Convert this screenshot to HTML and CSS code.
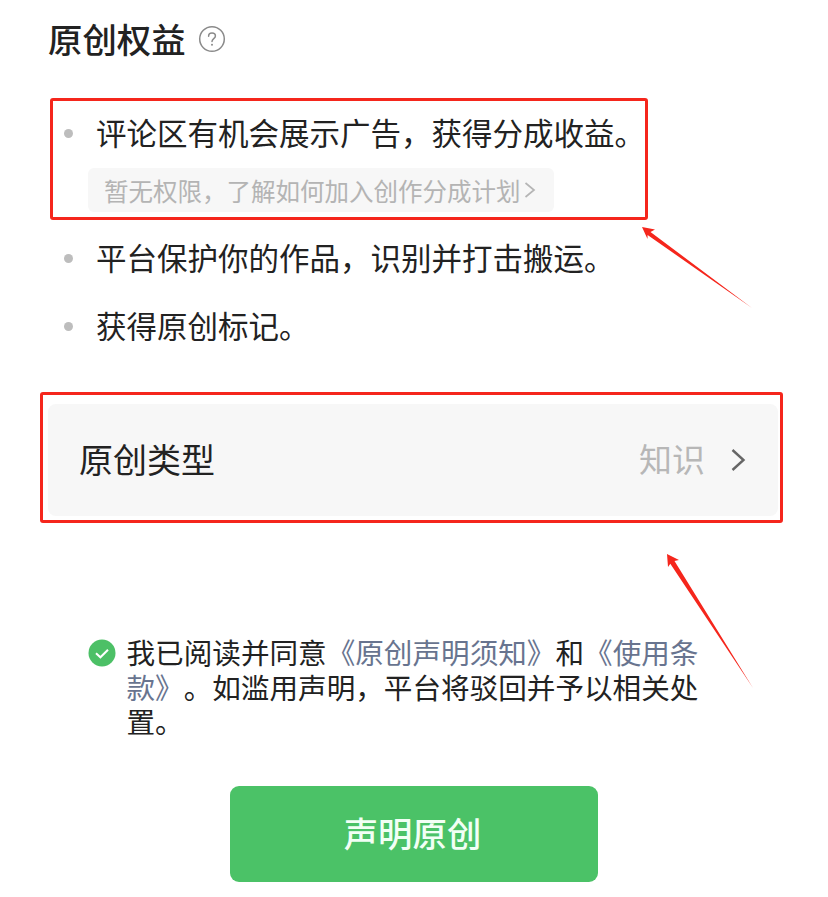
FILE: index.html
```html
<!DOCTYPE html>
<html lang="zh-CN">
<head>
    <meta charset="UTF-8">
    <meta name="viewport" content="width=device-width, initial-scale=1.0">
    <link rel="stylesheet" href="styles.css">
</head>
<body>
    <div class="page">
        <div class="title-row">
            <h1 class="page-title">原创权益</h1>
            <svg class="help-icon" width="28" height="28" viewBox="0 0 28 28" fill="none">
                <circle cx="14" cy="14" r="12.3" stroke="#8a8a8a" stroke-width="1.5"/>
                <path d="M10.6 11.2c0-1.9 1.5-3.2 3.4-3.2s3.4 1.2 3.4 3c0 2.6-3.4 2.7-3.4 5.4" stroke="#8a8a8a" stroke-width="1.5" stroke-linecap="round"/>
                <circle cx="14" cy="19.8" r="1" fill="#8a8a8a"/>
            </svg>
        </div>
        <ul class="rights-list">
            <li class="rights-item">
                <span class="rights-text">评论区有机会展示广告，获得分成收益。</span>
                <a class="rights-note" href="#">暂无权限，了解如何加入创作分成计划<svg class="note-arrow" width="12" height="18" viewBox="0 0 12 18" fill="none"><path d="M1.5 2l8.5 7-8.5 7" stroke="#b5b5b5" stroke-width="1.7"/></svg></a>
            </li>
            <li class="rights-item">
                <span class="rights-text">平台保护你的作品，识别并打击搬运。</span>
            </li>
            <li class="rights-item">
                <span class="rights-text">获得原创标记。</span>
            </li>
        </ul>
        <div class="type-card">
            <span class="type-label">原创类型</span>
            <span class="type-value">知识</span>
            <svg class="type-arrow" width="16" height="24" viewBox="0 0 16 24" fill="none"><path d="M2.5 2l11 10-11 10" stroke="#666" stroke-width="2.4"/></svg>
        </div>
        <div class="agreement">
            <svg class="check-icon" width="28" height="28" viewBox="0 0 28 28">
                <circle cx="14" cy="14" r="13.5" fill="#4cc066"/>
                <path d="M8 14.3l4.4 4 7.6-7.6" fill="none" stroke="#fff" stroke-width="2"/>
            </svg>
            <p class="agreement-text">我已阅读并同意<a class="doc-link" href="#">《原创声明须知》</a>和<a class="doc-link" href="#">《使用条款》</a>。如滥用声明，平台将驳回并予以相关处置。</p>
        </div>
        <button class="submit-button">声明原创</button>

        <!-- red annotations drawn on top of the screenshot -->
        <div class="mark mark-rights"></div>
        <div class="mark mark-type"></div>
        <svg class="arrows" width="828" height="897" viewBox="0 0 828 897">
            <polygon fill="#f5261c" points="642,227 655,229.5 650.5,232 752,308 647.6,235 647.5,239"/>
            <polygon fill="#f5261c" points="667,554 679,560 674.5,561 753,688 670.3,563.8 668,567"/>
        </svg>
    </div>
</body>
</html>
```

FILE: styles.css
```css
body {
    margin: 0;
    background-color: white;
    font-family: "Noto Sans CJK SC", "Noto Sans", sans-serif;
    color: #222;
    text-spacing-trim: space-all;
}
.page {
    position: relative;
    width: 828px;
    height: 897px;
    overflow: hidden;
    box-sizing: border-box;
    padding: 13px 0 0 48px;
}
.title-row {
    display: flex;
    align-items: center;
    gap: 12px;
    height: 50px;
}
.page-title {
    margin: 0;
    font-size: 34.4px;
    font-weight: 500;
    line-height: 50px;
}
.help-icon {
    flex: none;
    margin-top: 2px;
}
.rights-list {
    list-style-type: none;
    margin: 47px 0 0;
    padding: 0;
}
.rights-item {
    position: relative;
    margin-bottom: 24px;
    padding-left: 48px;
}
.rights-item::before {
    content: "";
    position: absolute;
    left: 16px;
    top: 19px;
    width: 9px;
    height: 9px;
    border-radius: 50%;
    background-color: #bdbdbd;
}
.rights-text {
    display: block;
    font-size: 30.5px;
    line-height: 44px;
}
.rights-note {
    display: inline-flex;
    align-items: center;
    gap: 3px;
    margin: 14px 0 -1px -8px;
    padding: 0 18px 0 16px;
    height: 44px;
    border-radius: 6px;
    background-color: #f7f7f7;
    color: #b4b4b4;
    font-size: 24.5px;
    text-decoration: none;
}
.type-card {
    display: flex;
    align-items: center;
    width: 730px;
    height: 112px;
    box-sizing: border-box;
    margin-top: 57px;
    padding: 0 32px 0 31px;
    border-radius: 8px;
    background-color: #f7f7f7;
}
.type-label {
    flex: 1;
    margin-bottom: 4px;
    font-size: 34px;
}
.type-value {
    margin-bottom: 4px;
    color: #b7b7b7;
    font-size: 33px;
}
.type-arrow {
    margin-left: 25px;
}
.agreement {
    display: flex;
    align-items: flex-start;
    gap: 10.5px;
    margin: 119px 0 0 40px;
}
.check-icon {
    flex: none;
    margin-top: 4px;
}
.agreement-text {
    width: 580px;
    margin: 0;
    font-size: 28.6px;
    line-height: 34.5px;
}
.doc-link {
    color: #68748f;
    text-decoration: none;
}
.submit-button {
    display: block;
    width: 368px;
    height: 96px;
    margin: 47px 0 0 182px;
    padding: 0 3px 4px 0;
    border: none;
    border-radius: 9px;
    background-color: #4bc267;
    color: #f2fff5;
    font-family: inherit;
    font-size: 34.4px;
    font-weight: 500;
}
.mark {
    position: absolute;
    box-sizing: border-box;
    border: 3px solid #f5261c;
    border-radius: 3px;
}
.mark-rights {
    left: 50px;
    top: 98px;
    width: 598px;
    height: 122px;
}
.mark-type {
    left: 40px;
    top: 392px;
    width: 743px;
    height: 131px;
}
.arrows {
    position: absolute;
    left: 0;
    top: 0;
}
```
